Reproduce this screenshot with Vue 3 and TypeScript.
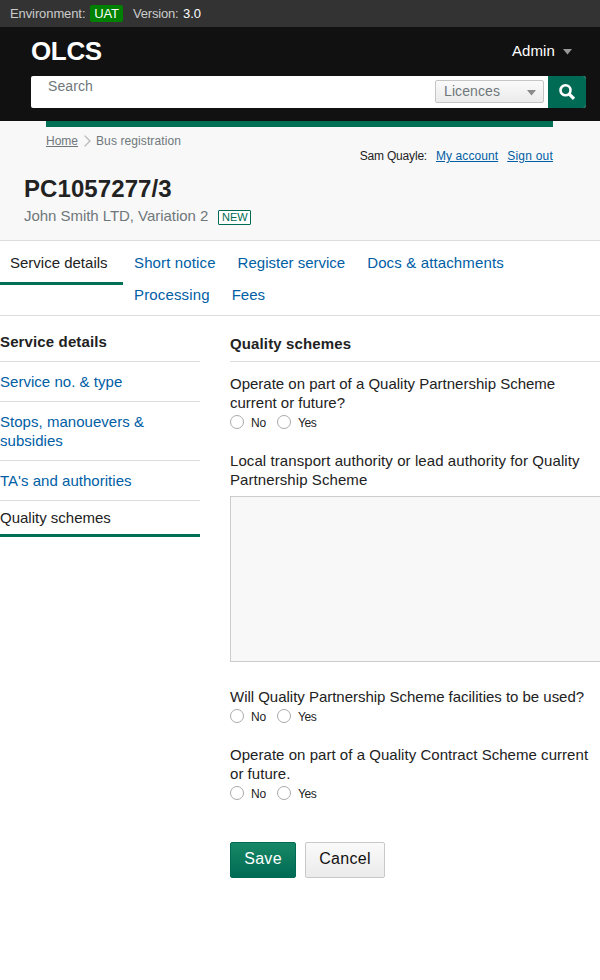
<script setup lang="ts">
interface NavItem { label: string; active?: boolean }
interface Option { id: string; label: string }

const tabs: NavItem[] = [
  { label: 'Short notice' },
  { label: 'Register service' },
  { label: 'Docs & attachments' },
  { label: 'Processing' },
  { label: 'Fees' },
]
const sections: NavItem[] = [
  { label: 'Service no. & type' },
  { label: 'Stops, manouevers & subsidies' },
  { label: "TA's and authorities" },
  { label: 'Quality schemes', active: true },
]
const options: Option[] = [
  { id: 'no', label: 'No' },
  { id: 'yes', label: 'Yes' },
]
</script>

<template>
  <div class="page">
    <div class="env">
      <span class="env-label">Environment:</span>
      <span class="env-tag">UAT</span>
      <span class="ver-label">Version:</span>
      <span class="ver">3.0</span>
    </div>

    <header class="top">
      <div class="top-row">
        <a class="logo">OLCS</a>
        <a class="admin"><span>Admin</span>
          <svg width="9" height="6" viewBox="0 0 9 6"><path d="M0 0h9L4.5 5.5z" fill="#999" /></svg>
        </a>
      </div>
      <div class="search">
        <span class="search-input">Search</span>
        <span class="select">
          <span>Licences</span>
          <svg width="9" height="6" viewBox="0 0 9 6"><path d="M0 0h9L4.5 5.5z" fill="#8a8a8a" /></svg>
        </span>
        <button class="search-btn" type="button">
          <svg width="16" height="16" viewBox="0 0 16 16" fill="none" stroke="#fff">
            <circle cx="6.5" cy="6.3" r="5" stroke-width="2.6" />
            <path d="M10 9.9l5 4.9" stroke-width="3.2" />
          </svg>
        </button>
      </div>
    </header>

    <section class="head">
      <div class="bar"></div>
      <div class="meta">
        <nav class="crumbs">
          <a class="home">Home</a>
          <svg width="7" height="12" viewBox="0 0 7 12" fill="none" stroke="#b5b8ba" stroke-width="1.3"><path d="M.6.6L6 6 .6 11.4" /></svg>
          <span class="crumb">Bus registration</span>
        </nav>
        <div class="user">
          <span class="user-name">Sam Quayle:</span>
          <a class="account">My account</a>
          <a class="signout">Sign out</a>
        </div>
      </div>
      <h1>PC1057277/3</h1>
      <div class="sub"><span class="sub-text">John Smith LTD, Variation 2</span><span class="badge">NEW</span></div>
    </section>

    <nav class="tabs">
      <a class="tab-active">Service details</a>
      <div class="tab-list">
        <a v-for="tab in tabs" :key="tab.label">{{ tab.label }}</a>
      </div>
    </nav>

    <div class="body">
      <aside>
        <h2>Service details</h2>
        <a v-for="s in sections" :key="s.label" class="side" :class="{ current: s.active }">{{ s.label }}</a>
      </aside>
      <main>
        <h2>Quality schemes</h2>
        <div class="field first">
          <p class="q q1">Operate on part of a Quality Partnership Scheme<br>current or future?</p>
          <div class="radios"><label v-for="o in options" :key="o.id"><i></i><span>{{ o.label }}</span></label></div>
        </div>
        <div class="field long">
          <p class="q q2">Local transport authority or lead authority for Quality<br>Partnership Scheme</p>
          <div class="textarea"></div>
        </div>
        <div class="field">
          <p class="q q3">Will Quality Partnership Scheme facilities to be used?</p>
          <div class="radios"><label v-for="o in options" :key="o.id"><i></i><span>{{ o.label }}</span></label></div>
        </div>
        <div class="field">
          <p class="q q4">Operate on part of a Quality Contract Scheme current<br>or future.</p>
          <div class="radios"><label v-for="o in options" :key="o.id"><i></i><span>{{ o.label }}</span></label></div>
        </div>
        <div class="actions">
          <button class="btn save" type="button">Save</button>
          <button class="btn cancel" type="button">Cancel</button>
        </div>
      </main>
    </div>
  </div>
</template>

<style>
body { margin: 0; background: #fff; overflow: hidden; }
</style>

<style scoped>
* { box-sizing: border-box; }
.page { width: 600px; height: 980px; overflow: hidden; font-family: "Liberation Sans", Arial, sans-serif; color: #222; font-size: 15px; line-height: 19px; background: #fff; }
.env { height: 27px; background: #333; color: #ccc; font-size: 13px; display: flex; align-items: center; padding-left: 10px; white-space: nowrap; }
.env-label { width: 80px; letter-spacing: -.1px; }
.env-tag { width: 33px; height: 17px; line-height: 17px; background: #008000; color: #fff; border-radius: 2px; text-align: center; margin-right: 10px; letter-spacing: -.2px; }
.ver-label { width: 50px; letter-spacing: -.2px; }
.ver { color: #fff; }
.top { height: 94px; background: #111; padding: 0 14px 0 31px; }
.top-row { height: 49px; display: flex; justify-content: space-between; align-items: center; color: #fff; padding: 0 14px 2px 0; }
.logo { font-size: 26px; font-weight: bold; line-height: 30px; letter-spacing: -.35px; }
.admin { display: flex; align-items: center; gap: 8px; letter-spacing: .12px; }
.admin svg { margin-top: 2px; }
.search { height: 32px; background: #fff; border-radius: 2px 3px 3px 2px; display: flex; align-items: center; overflow: hidden; color: #6f777b; }
.search-input { flex: 1; padding-left: 17px; font-size: 14px; align-self: flex-start; line-height: 21px; letter-spacing: .1px; }
.select { width: 109px; height: 23px; border: 1px solid #c5c5c5; border-radius: 2px; background: linear-gradient(#fafafa, #ebebeb); display: flex; align-items: center; justify-content: space-between; padding: 0 7px 0 8px; font-size: 14px; margin: 0 4px 1px 0; letter-spacing: .1px; }
.select svg { margin-top: 3px; }
.search-btn { width: 38px; height: 32px; border: 0; padding: 0 0 1px; background: #006b54; display: flex; align-items: center; justify-content: center; }
.head { height: 120px; background: #f8f8f8; border-bottom: 1px solid #ddd; }
.bar { height: 6px; margin: 0 47px 0 46px; background: #007056; }
.meta { height: 47px; margin: 0 47px 0 46px; display: flex; justify-content: space-between; font-size: 12px; }
.crumbs { display: flex; align-items: center; height: 28px; color: #6f777b; }
.crumbs svg { margin: 0 5px 0 6px; }
.crumb { letter-spacing: .1px; }
.home { text-decoration: underline; }
.user { padding-top: 20px; display: flex; gap: 9px; height: 40px; }
.user-name { letter-spacing: -.18px; }
.account { letter-spacing: .08px; }
.signout { letter-spacing: .22px; }
.user a { color: #005ea5; text-decoration: underline; }
h1 { margin: 0; padding-left: 24px; font-size: 24px; line-height: 30px; letter-spacing: .08px; }
.sub { display: flex; align-items: center; padding: 0 0 2px 24px; height: 24px; color: #6f777b; }
.sub-text { letter-spacing: -.04px; }
.badge { margin: 4px 0 0 10px; width: 33px; height: 15px; border: 1px solid #006b54; border-radius: 1px; color: #006b54; background: #fff; font-size: 11px; line-height: 13px; text-align: center; letter-spacing: -.1px; }
.tabs { height: 75px; display: flex; border-bottom: 1px solid #ddd; align-items: flex-start; }
.tab-active { width: 123px; height: 44px; border-bottom: 3px solid #007056; padding: 12px 10px 0; white-space: nowrap; }
.tab-list { flex: 1; display: flex; flex-wrap: wrap; padding: 12px 50px 0 11px; column-gap: 22px; row-gap: 13px; }
.tab-list a, .side { color: #005ea5; }
.tab-list a:nth-child(1) { letter-spacing: .13px; }
.tab-list a:nth-child(3) { letter-spacing: .14px; }
.tab-list a:nth-child(4) { letter-spacing: .15px; }
.body { display: flex; gap: 30px; }
aside { width: 200px; flex: none; }
h2 { margin: 0; font-size: 15px; line-height: 19px; height: 46px; padding-top: 16px; border-bottom: 1px solid #ddd; letter-spacing: .13px; }
.side { display: block; padding: 10px 0; border-bottom: 1px solid #ddd; letter-spacing: .03px; }
.side.current { padding: 7px 0; color: #222; border-bottom: 3px solid #007056; letter-spacing: 0; }
main { width: 380px; flex: none; }
main h2 { padding-top: 18px; }
.field { margin-bottom: 18px; }
.first { padding-top: 12px; }
.long { margin-bottom: 25px; }
.q { margin: 0; padding-bottom: 1px; white-space: nowrap; }
.q2 { letter-spacing: .08px; }
.q3 { letter-spacing: -.02px; }
.q4 { letter-spacing: .04px; }
.radios { display: flex; gap: 10px; height: 20px; font-size: 12px; letter-spacing: -.05px; }
.radios label { display: flex; align-items: flex-start; gap: 7px; }
.radios label:first-child { width: 37px; }
.radios span { padding-top: 1px; }
.radios label:last-child { letter-spacing: -.4px; }
.radios i { width: 14px; height: 14px; margin-top: 2px; border: 1px solid #aaa; border-radius: 50%; background: #fff; }
.textarea { margin-top: 6px; height: 166px; border: 1px solid #ccc; border-right: 0; background: #f8f8f8; }
.actions { display: flex; gap: 9px; padding-top: 20px; }
.btn { height: 36px; padding: 0 0 3px; font: 16px "Liberation Sans", Arial, sans-serif; border-radius: 2px; letter-spacing: .3px; }
.save { width: 66px; border: 1px solid #006b54; color: #fff; background: linear-gradient(#178866, #006b54); }
.cancel { width: 80px; border: 1px solid #c8c8c8; color: #111; background: linear-gradient(#fafafa, #ebebeb); }
</style>
